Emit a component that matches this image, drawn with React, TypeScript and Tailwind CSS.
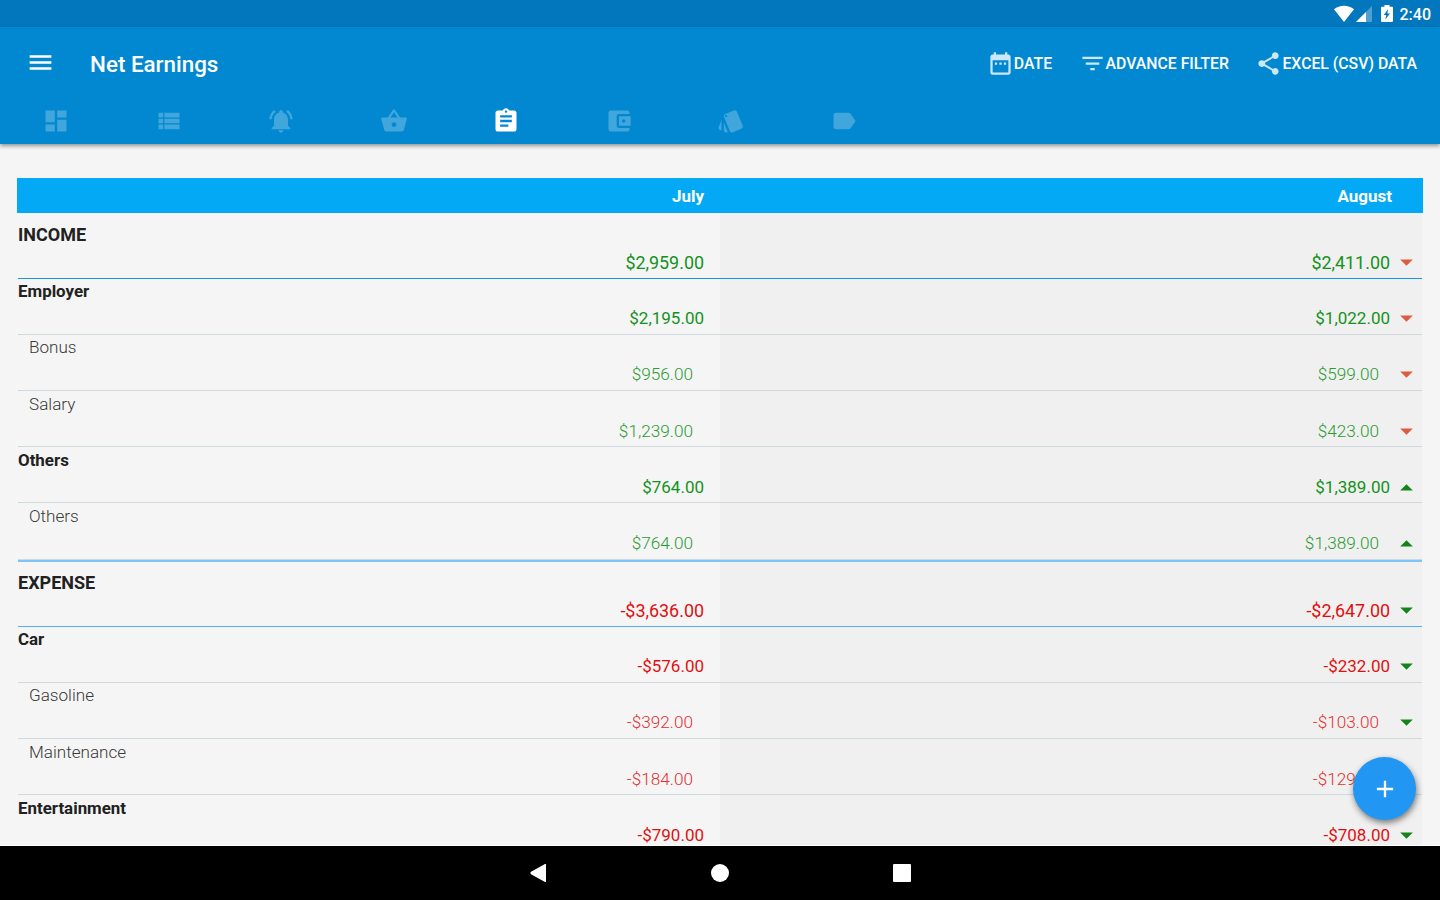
import clsx from "clsx";
import type { IconType } from "react-icons";
import {
    MdAccountBalanceWallet,
    MdAdd,
    MdAssignment,
    MdDashboard,
    MdDateRange,
    MdFilterList,
    MdLabel,
    MdMenu,
    MdNotificationsActive,
    MdShare,
    MdShoppingBasket,
    MdStyle,
    MdViewList,
} from "react-icons/md";

type Trend = { dir: "up" | "down"; good: boolean };

interface IRow {
    id: number;
    kind: "section" | "group" | "item";
    label: string;
    july: string;
    august: string;
    trend: Trend;
    className: string;
}

const tabs: { id: string; icon: IconType }[] = [
    { id: "dashboard", icon: MdDashboard },
    { id: "list", icon: MdViewList },
    { id: "reminders", icon: MdNotificationsActive },
    { id: "budget", icon: MdShoppingBasket },
    { id: "earnings", icon: MdAssignment },
    { id: "accounts", icon: MdAccountBalanceWallet },
    { id: "categories", icon: MdStyle },
    { id: "labels", icon: MdLabel },
];

const down = (good: boolean): Trend => ({ dir: "down", good });
const up = (good: boolean): Trend => ({ dir: "up", good });

const grey = "border-b border-[#cfd8dc]";

const rows: IRow[] = [
    { id: 1, kind: "section", label: "INCOME", july: "$2,959.00", august: "$2,411.00", trend: down(false), className: "h-[66px] pt-2.5 border-b border-[#1297ef]" },
    { id: 2, kind: "group", label: "Employer", july: "$2,195.00", august: "$1,022.00", trend: down(false), className: clsx("h-14", grey) },
    { id: 3, kind: "item", label: "Bonus", july: "$956.00", august: "$599.00", trend: down(false), className: clsx("h-14", grey) },
    { id: 4, kind: "item", label: "Salary", july: "$1,239.00", august: "$423.00", trend: down(false), className: clsx("h-14 pt-px", grey) },
    { id: 5, kind: "group", label: "Others", july: "$764.00", august: "$1,389.00", trend: up(true), className: clsx("h-14 pt-px", grey) },
    { id: 6, kind: "item", label: "Others", july: "$764.00", august: "$1,389.00", trend: up(true), className: clsx("h-[57px] pt-px", grey) },
    { id: 7, kind: "section", label: "EXPENSE", july: "-$3,636.00", august: "-$2,647.00", trend: down(true), className: "h-[67px] pt-[9px] border-t-2 border-t-[#7cc4fa] border-b border-b-[#4fb0f5]" },
    { id: 8, kind: "group", label: "Car", july: "-$576.00", august: "-$232.00", trend: down(true), className: clsx("h-14", grey) },
    { id: 9, kind: "item", label: "Gasoline", july: "-$392.00", august: "-$103.00", trend: down(true), className: clsx("h-14", grey) },
    { id: 10, kind: "item", label: "Maintenance", july: "-$184.00", august: "-$129.00", trend: down(true), className: clsx("h-14 pt-px", grey) },
    { id: 11, kind: "group", label: "Entertainment", july: "-$790.00", august: "-$708.00", trend: down(true), className: "h-14 pt-px" },
];

function TrendArrow({ trend }: { trend: Trend }) {
    return (
        <svg
            className={clsx("h-[7px] w-[13px]", trend.good ? "text-[#16821b]" : "text-[#e05a41]")}
            viewBox="0 0 13 7"
            fill="currentColor"
        >
            <path d={trend.dir === "up" ? "M.2 6.500 6.500.2l6.300 6.300z" : "M.2.500h12.600L6.500 6.800z"} />
        </svg>
    );
}

function ReportRow({ row }: { row: IRow }) {
    const isItem = row.kind === "item";
    const negative = row.july.startsWith("-");
    const amount = clsx(
        "h-6",
        row.kind === "section" && "text-[17.9px] leading-[26px]",
        row.kind === "group" && "text-[17px] leading-6",
        isItem && "text-[17.2px] leading-6 font-light",
        negative
            ? isItem ? "text-[#e23232]" : "text-[#e01010]"
            : isItem ? "text-[#2b9b33]" : "text-[#14921c]"
    );

    return (
        <div
            className={clsx(
                "flex bg-[linear-gradient(to_right,#f5f5f5_50%,#f0f0f0_50%)]",
                row.className
            )}
        >
            <div className="w-1/2">
                <div
                    className={clsx(
                        "h-6 leading-6",
                        row.kind === "section" && "text-[18px] font-bold text-[#212121]",
                        row.kind === "group" && "text-[16.9px] font-bold text-[#212121]",
                        isItem && "pl-[11px] text-[17.1px] font-light text-[#383838]"
                    )}
                >
                    {row.label}
                </div>
                <div className={clsx("mt-[3px] text-right", amount, isItem ? "pr-[27px]" : "pr-4")}>
                    {row.july}
                </div>
            </div>
            <div className="flex h-[51px] w-1/2 items-end justify-end pr-[9px]">
                <span className={clsx(amount, isItem ? "mr-[21px]" : "mr-2.5")}>{row.august}</span>
                <span className="flex h-6 items-center">
                    <TrendArrow trend={row.trend} />
                </span>
            </div>
        </div>
    );
}

function StatusBar() {
    return (
        <div className="flex h-[27px] items-center justify-end bg-[#0277bd] pr-[9px] text-white">
            <svg className="h-[17px] w-5" viewBox="0 0 20 17" fill="currentColor">
                <path d="M10 17 0 4.2C2.800 1.900 6.200.7 10 .7s7.200 1.200 10 3.500z" />
            </svg>
            <svg className="ml-0.5 h-[17px] w-4" viewBox="0 0 16 17" fill="currentColor">
                <path d="M16 1v16H0z" opacity=".3" />
                <path d="M10 7v10H0z" />
            </svg>
            <svg className="ml-[9px] h-[17px] w-3" viewBox="0 0 12 17" fill="currentColor">
                <path
                    fillRule="evenodd"
                    d="M3.500 0h5v1.800H11q1 0 1 1V16q0 1-1 1H1q-1 0-1-1V2.800q0-1 1-1h2.500zM7.200 4 2.800 10h2.500l-1 4.500L9 8.500H6.300z"
                />
            </svg>
            <span className="ml-[7px] pt-0.5 text-[16px] leading-[27px] font-medium">2:40</span>
        </div>
    );
}

function ActionButton({ icon: Icon, label }: { icon: IconType; label: string }) {
    return (
        <button type="button" className="flex items-center text-[15.8px] font-medium">
            <Icon className="size-[27px] text-white/80" />
            <span className="pt-0.5">{label}</span>
        </button>
    );
}

function NavigationBar() {
    return (
        <div className="flex h-[54px] items-center justify-center gap-[164px] bg-black text-white">
            <svg className="h-[18px] w-[18px]" viewBox="0 0 18 18" fill="currentColor">
                <path d="M17 0v18h-1L2 10.200Q.5 9 2 7.800L16 0z" />
            </svg>
            <div className="size-[18px] rounded-full bg-white" />
            <div className="size-[18px] rounded-[1px] bg-white" />
        </div>
    );
}

export default function App() {
    return (
        <div className="relative flex h-[900px] w-[1440px] flex-col overflow-hidden bg-[#f5f5f5] font-[Roboto,sans-serif]">
            <StatusBar />
            <header className="z-10 h-[117px] bg-[#0288d1] text-white shadow-[0_2px_4px_rgba(0,0,0,0.4)]">
                <div className="flex h-[72px] items-center pr-[23px] pl-[26px]">
                    <MdMenu className="mb-0.5 size-[29px]" />
                    <h1 className="ml-[35px] pt-0.5 text-[22.4px] leading-8 font-medium">Net Earnings</h1>
                    <div className="ml-auto flex items-center gap-[26.5px]">
                        <ActionButton icon={MdDateRange} label="DATE" />
                        <ActionButton icon={MdFilterList} label="ADVANCE FILTER" />
                        <ActionButton icon={MdShare} label="EXCEL (CSV) DATA" />
                    </div>
                </div>
                <nav className="flex h-[45px]">
                    {tabs.map(({ id, icon: Icon }) => (
                        <button
                            key={id}
                            type="button"
                            className={clsx(
                                "flex w-[112.5px] justify-center pt-2",
                                id === "earnings" ? "text-white" : "text-white/25"
                            )}
                        >
                            <Icon className="size-7" />
                        </button>
                    ))}
                </nav>
            </header>
            <main className="min-h-0 flex-1 overflow-hidden border-b border-white pt-[34px]">
                <div className="mx-[17px] flex h-[35px] items-center bg-[#03a9f4] pt-0.5 text-[17px] font-bold text-white">
                    <div className="w-1/2 pr-4 text-right">July</div>
                    <div className="w-1/2 pr-[31px] text-right">August</div>
                </div>
                <div className="mx-[18px]">
                    {rows.map((row) => (
                        <ReportRow key={row.id} row={row} />
                    ))}
                </div>
            </main>
            <NavigationBar />
            <button
                type="button"
                className="absolute right-6 bottom-20 z-10 flex size-[63px] items-center justify-center rounded-full bg-[#2196f3] text-white shadow-[1px_3px_6px_rgba(0,0,0,0.5)]"
            >
                <MdAdd className="size-7" />
            </button>
        </div>
    );
}
